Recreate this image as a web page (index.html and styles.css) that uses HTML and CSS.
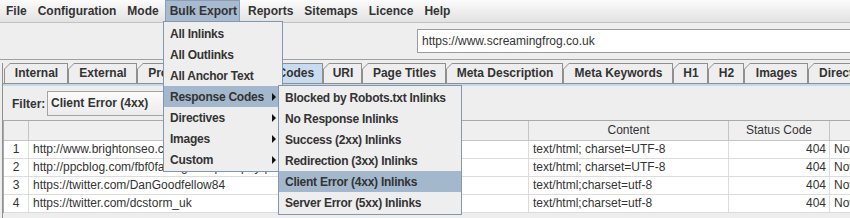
FILE: index.html
```html
<!DOCTYPE html>
<html>
<head>
<meta charset="utf-8">
<link rel="stylesheet" href="styles.css">
</head>
<body>
<div class="menubar">
  <span class="mi">File</span>
  <span class="mi">Configuration</span>
  <span class="mi">Mode</span>
  <span class="mi active">Bulk Export</span>
  <span class="mi">Reports</span>
  <span class="mi">Sitemaps</span>
  <span class="mi">Licence</span>
  <span class="mi">Help</span>
</div>
<div class="toolbar">
  <div class="spacer"></div>
  <div class="url">https://www.screamingfrog.co.uk</div>
</div>
<div class="split">
  <div class="tabs">
    <div class="tab t-internal">Internal</div>
    <div class="tab t-external">External</div>
    <div class="tab t-protocol">Protocol</div>
    <div class="tab t-codes sel">Response Codes</div>
    <div class="tab t-uri">URI</div>
    <div class="tab t-titles">Page Titles</div>
    <div class="tab t-desc">Meta Description</div>
    <div class="tab t-keys">Meta Keywords</div>
    <div class="tab t-h1">H1</div>
    <div class="tab t-h2">H2</div>
    <div class="tab t-images">Images</div>
    <div class="tab t-directives">Directives</div>
  </div>
  <div class="panel">
    <div class="filter">
      <span class="flabel">Filter:</span>
      <div class="combo">Client Error (4xx)</div>
    </div>
    <div class="grid">
      <div class="row head">
        <div class="c"></div>
        <div class="c">Address</div>
        <div class="c">Content</div>
        <div class="c">Status Code</div>
        <div class="c">Status</div>
      </div>
      <div class="row">
        <div class="c idx">1</div>
        <div class="c">http://www.brightonseo.com/speakers/dan-goodfellow/</div>
        <div class="c">text/html; charset=UTF-8</div>
        <div class="c num">404</div>
        <div class="c">Not Found</div>
      </div>
      <div class="row">
        <div class="c idx">2</div>
        <div class="c">http://ppcblog.com/fbf0fa9c-guest-post-pay-per-click/</div>
        <div class="c">text/html; charset=UTF-8</div>
        <div class="c num">404</div>
        <div class="c">Not Found</div>
      </div>
      <div class="row">
        <div class="c idx">3</div>
        <div class="c">https://twitter.com/DanGoodfellow84</div>
        <div class="c">text/html;charset=utf-8</div>
        <div class="c num">404</div>
        <div class="c">Not Found</div>
      </div>
      <div class="row">
        <div class="c idx">4</div>
        <div class="c">https://twitter.com/dcstorm_uk</div>
        <div class="c">text/html;charset=utf-8</div>
        <div class="c num">404</div>
        <div class="c">Not Found</div>
      </div>
    </div>
  </div>
</div>

<div class="menu main">
  <div class="item">All Inlinks</div>
  <div class="item">All Outlinks</div>
  <div class="item">All Anchor Text</div>
  <div class="item hl">Response Codes<svg class="arr" width="4" height="8" viewBox="0 0 4 8"><path d="M0 0L4 4L0 8Z"/></svg></div>
  <div class="item">Directives<svg class="arr" width="4" height="8" viewBox="0 0 4 8"><path d="M0 0L4 4L0 8Z"/></svg></div>
  <div class="item">Images<svg class="arr" width="4" height="8" viewBox="0 0 4 8"><path d="M0 0L4 4L0 8Z"/></svg></div>
  <div class="item">Custom<svg class="arr" width="4" height="8" viewBox="0 0 4 8"><path d="M0 0L4 4L0 8Z"/></svg></div>
</div>
<div class="menu sub">
  <div class="item">Blocked by Robots.txt Inlinks</div>
  <div class="item">No Response Inlinks</div>
  <div class="item">Success (2xx) Inlinks</div>
  <div class="item">Redirection (3xx) Inlinks</div>
  <div class="item hl">Client Error (4xx) Inlinks</div>
  <div class="item">Server Error (5xx) Inlinks</div>
</div>
</body>
</html>
```

FILE: styles.css
```css
* { box-sizing: border-box; }
html, body { margin: 0; padding: 0; }
body {
  width: 850px;
  height: 218px;
  overflow: hidden;
  position: relative;
  background: #eeeeee;
  font-family: "Liberation Sans", Arial, sans-serif;
  font-size: 12px;
  color: #333333;
}

/* menu bar */
.menubar {
  display: flex;
  gap: 1px;
  height: 23px;
  padding-left: 1px;
  background: linear-gradient(#fbfbfb, #e2e2e2);
  border-bottom: 1px solid #c2c2c2;
  font-weight: bold;
}
.mi {
  padding: 0 5px;
  height: 22px;
  line-height: 22px;
  white-space: nowrap;
}
.mi.active {
  background: #a7bacf;
  box-shadow: inset 0 0 0 1px #8b9eb5;
  padding: 0 3px 0 5px;
  margin-right: 2px;
}

/* toolbar with URL field */
.toolbar {
  display: grid;
  grid-template-columns: 417px 1fr;
  height: 36px;
  padding-top: 6px;
}
.url {
  height: 24px;
  line-height: 22px;
  padding-left: 4px;
  background: #ffffff;
  border: 1px solid #9c9c9c;
  border-right: none;
  white-space: nowrap;
}

/* tabbed pane */
.split {
  border-top: 1px solid #a0a0a0;
  padding-top: 3px;
  padding-left: 2px;
}
.tabs {
  display: flex;
  height: 20px;
  padding-left: 1px;
  border-left: 1px solid #8e8f8f;
  font-weight: bold;
}
.tab {
  position: relative;
  isolation: isolate;
  flex: none;
  height: 20px;
  line-height: 20px;
  padding-left: 1px;
  text-align: center;
  white-space: nowrap;
  overflow: hidden;
}
.tab::before {
  content: "";
  position: absolute;
  inset: 0;
  z-index: -1;
  background: #8e8f8f;
  clip-path: polygon(0 6px, 6px 0, 100% 0, 100% 100%, 0 100%);
}
.tab::after {
  content: "";
  position: absolute;
  inset: 1px 1px 0 1px;
  z-index: -1;
  background: #eeeeee;
  clip-path: polygon(0 5px, 5px 0, 100% 0, 100% 100%, 0 100%);
}
.tab.sel::after { background: #c8dcf0; }
.t-internal { width: 64px; }
.t-external { width: 69px; }
.t-protocol { width: 70px; }
.t-codes { width: 116px; }
.t-uri { width: 39px; }
.t-titles { width: 84px; }
.t-desc { width: 117px; }
.t-keys { width: 110px; }
.t-h1 { width: 35px; }
.t-h2 { width: 36px; }
.t-images { width: 64px; }
.t-directives { width: 82px; text-align: left; padding-left: 11px; }

.panel {
  border-top: 1px solid #8e8f8f;
  border-left: 1px solid #8e8f8f;
  box-shadow: inset 0 2px 0 #c4d8ec;
  padding-top: 7px;
  height: 140px;
}
.filter {
  display: flex;
  align-items: center;
  height: 25px;
  font-weight: bold;
}
.flabel {
  margin-left: 9px;
  width: 35px;
}
.combo {
  width: 230px;
  height: 25px;
  line-height: 23px;
  padding-left: 3px;
  border: 1px solid #a3a3a3;
  background: linear-gradient(#fbfbfb, #ececec);
  white-space: nowrap;
}

/* table */
.grid {
  margin-top: 4px;
  border-top: 1px solid #a9a9a9;
  border-left: 1px solid #a9a9a9;
  width: 1000px;
}
.row {
  display: grid;
  grid-template-columns: 25px 500px 200px 101px 173px;
  height: 18px;
  background: #ffffff;
  border-bottom: 1px solid #dcdcdc;
}
.row.head {
  height: 20px;
  background: #efefef;
  border-bottom: 1px solid #c4c4c4;
}
.c {
  border-right: 1px solid #dcdcdc;
  padding: 0 4px;
  line-height: 17px;
  white-space: nowrap;
  overflow: hidden;
}
.head .c {
  border-right-color: #c4c4c4;
  text-align: center;
  line-height: 19px;
}
.c.idx { text-align: center; padding: 0; }
.c.num { text-align: right; padding-right: 3px; }

/* popup menus */
.menu {
  position: absolute;
  background: #eeeeee;
  border: 1px solid #8397af;
  padding: 1px 0;
  font-weight: bold;
  letter-spacing: -0.25px;
}
.menu.main { left: 163px; top: 21px; width: 120px; }
.menu.sub { left: 278px; top: 85px; width: 184px; }
.item {
  display: flex;
  align-items: center;
  justify-content: space-between;
  height: 21px;
  padding: 0 6px;
  white-space: nowrap;
}
.item.hl { background: #a4b8cd; }
.arr { fill: #111111; flex: none; }
```
